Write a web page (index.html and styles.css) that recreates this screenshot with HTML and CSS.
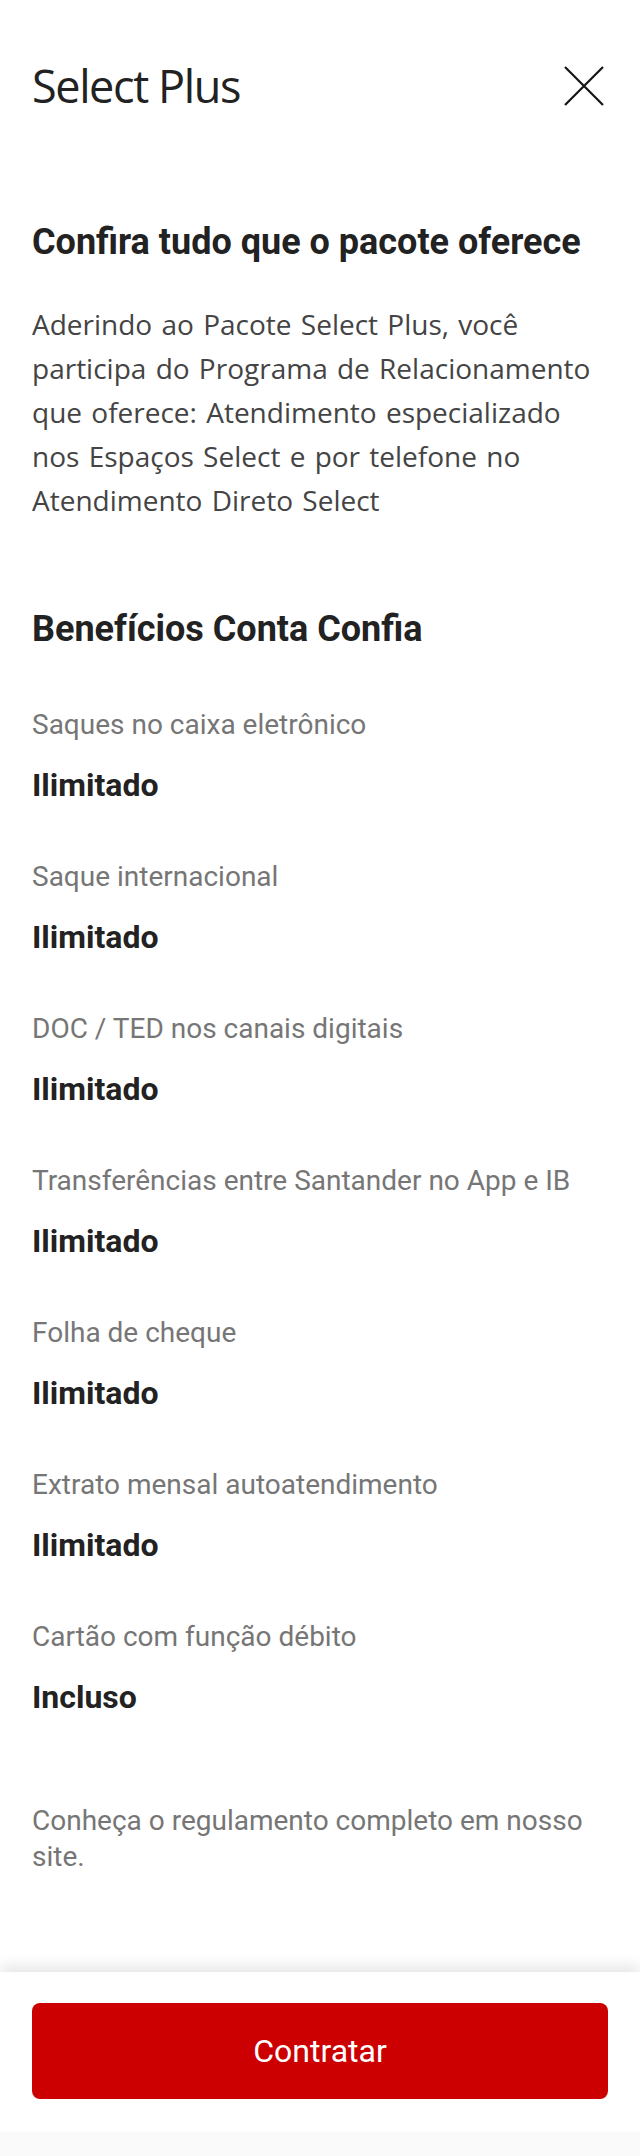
FILE: index.html
```html
<!DOCTYPE html>
<html lang="pt-BR">
<head>
    <meta charset="UTF-8">
    <meta name="viewport" content="width=device-width, initial-scale=1.0">
    <title>Select Plus</title>
    <link rel="stylesheet" href="styles.css">
</head>
<body>
    <div class="page">
        <header class="header">
            <h1 class="title">Select Plus</h1>
            <button class="close-btn" aria-label="Fechar">
                <svg width="40" height="40" viewBox="0 0 40 40">
                    <path d="M1 1 L39 39 M39 1 L1 39" stroke="#151515" stroke-width="2.2" fill="none"/>
                </svg>
            </button>
        </header>

        <main class="content">
            <h2 class="section-title">Confira tudo que o pacote oferece</h2>
            <p class="intro">Aderindo ao Pacote Select Plus, você participa do Programa de Relacionamento que oferece: Atendimento especializado nos Espaços Select e por telefone no Atendimento Direto Select</p>

            <h2 class="section-title benefits-title">Benefícios Conta Confia</h2>

            <ul class="benefits">
                <li class="benefit">
                    <span class="benefit-label">Saques no caixa eletrônico</span>
                    <span class="benefit-value">Ilimitado</span>
                </li>
                <li class="benefit">
                    <span class="benefit-label">Saque internacional</span>
                    <span class="benefit-value">Ilimitado</span>
                </li>
                <li class="benefit">
                    <span class="benefit-label">DOC / TED nos canais digitais</span>
                    <span class="benefit-value">Ilimitado</span>
                </li>
                <li class="benefit">
                    <span class="benefit-label">Transferências entre Santander no App e IB</span>
                    <span class="benefit-value">Ilimitado</span>
                </li>
                <li class="benefit">
                    <span class="benefit-label">Folha de cheque</span>
                    <span class="benefit-value">Ilimitado</span>
                </li>
                <li class="benefit">
                    <span class="benefit-label">Extrato mensal autoatendimento</span>
                    <span class="benefit-value">Ilimitado</span>
                </li>
                <li class="benefit">
                    <span class="benefit-label">Cartão com função débito</span>
                    <span class="benefit-value">Incluso</span>
                </li>
            </ul>

            <p class="note">Conheça o regulamento completo em nosso site.</p>
        </main>

        <footer class="footer">
            <button class="btn-primary">Contratar</button>
        </footer>
        <div class="nav-strip"></div>
    </div>
</body>
</html>
```

FILE: styles.css
```css
/* Select Plus - detalhes do pacote */
body {
    margin: 0;
    background-color: #fff;
    font-family: Roboto, "Liberation Sans", sans-serif;
    color: #222;
}

.page {
    display: flex;
    flex-direction: column;
    min-height: 100vh;
}

.header {
    display: flex;
    align-items: center;
    justify-content: space-between;
    padding: 58px 36px 0 32px;
}

.title {
    margin: 0;
    font-family: "Open Sans", "Noto Sans", sans-serif;
    font-weight: 400;
    font-size: 45px;
    line-height: 56px;
    letter-spacing: -1.4px;
    color: #222;
}

.close-btn {
    display: flex;
    padding: 0;
    border: none;
    background: none;
    cursor: pointer;
}

.content {
    flex: 1;
    padding: 0 32px;
}

.section-title {
    margin: 106px 0 0;
    font-size: 36px;
    font-weight: 700;
    line-height: 44px;
    color: #222;
}

.intro {
    margin: 38px 0 0;
    font-family: "Open Sans", "Noto Sans", sans-serif;
    font-size: 28px;
    line-height: 44px;
    word-spacing: 2px;
    color: #444;
}

.benefits-title {
    margin-top: 85px;
}

.benefits {
    list-style: none;
    margin: 0;
    padding: 0;
}

.benefit {
    display: flex;
    flex-direction: column;
    gap: 22px;
    margin-top: 56px;
}

.benefit + .benefit {
    margin-top: 54px;
}

.benefit-label {
    font-size: 28px;
    line-height: 36px;
    color: #767676;
}

.benefit-value {
    font-size: 32px;
    font-weight: 700;
    line-height: 40px;
    color: #222;
}

.note {
    margin: 86px 0 0;
    font-size: 28px;
    line-height: 36px;
    color: #767676;
}

.footer {
    padding: 31px 32px 33px;
    background-color: #fff;
    box-shadow: 0 -6px 14px rgba(0, 0, 0, 0.1);
}

.btn-primary {
    display: block;
    width: 100%;
    height: 96px;
    border: none;
    border-radius: 8px;
    background-color: #cc0000;
    color: #fff;
    font-family: Roboto, "Liberation Sans", sans-serif;
    font-size: 32px;
    cursor: pointer;
}

.nav-strip {
    height: 24px;
    background-color: #fafafa;
}
```
